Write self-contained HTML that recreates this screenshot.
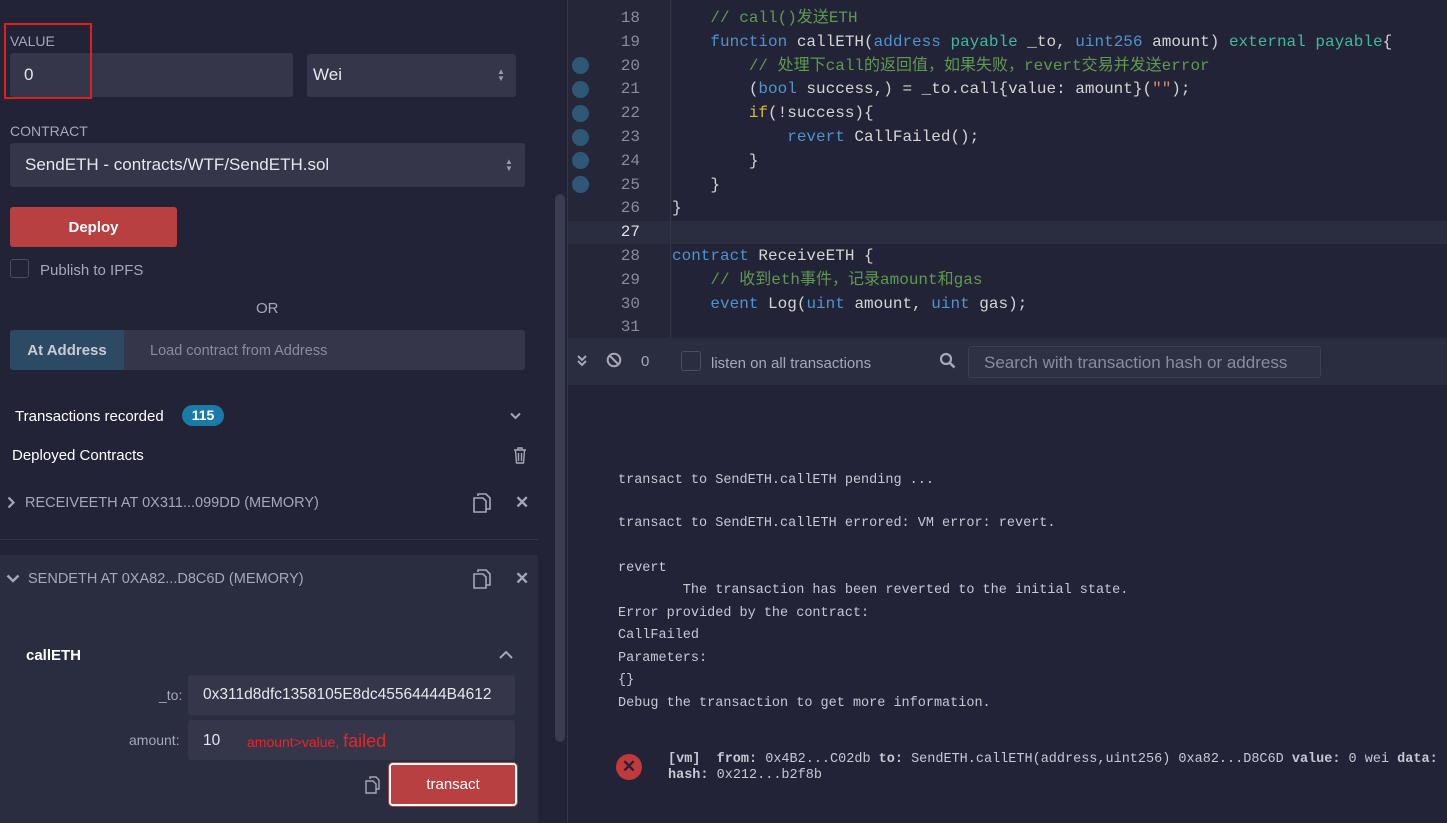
<!DOCTYPE html>
<html><head><meta charset="utf-8"><style>
*{margin:0;padding:0;box-sizing:border-box}
body{width:1447px;height:823px;overflow:hidden;background:#222336;font-family:"Liberation Sans","Noto Sans CJK SC",sans-serif;color:#c9cbd6;position:relative}
.a{position:absolute}
.in{background:#353649;border-radius:3px}
.mono{font-family:"Liberation Mono","Noto Sans CJK SC",monospace}
.code div{position:absolute;left:0;height:24px;line-height:24px;font-size:16px;white-space:pre;color:#d4d4d4}
.ln{position:absolute;left:0;width:72px;text-align:right;font-size:16px;line-height:24px;color:#8a8c9e}
.cm{color:#5f9a50}.kw{color:#4e94ce}.ty{color:#3fb9a0}.if{color:#d7ba3d}.st{color:#ce9178}
.t div{position:absolute;left:618px;font-size:13.5px;color:#c6c8d4;white-space:pre}
.dot{position:absolute;left:572px;width:17px;height:17px;border-radius:50%;background:#2f5877}
.L{margin-top:2px}
</style></head><body>
<!-- LEFT PANEL -->
<div class="a" style="left:10px;top:33px;font-size:14px;color:#a6a8b8">VALUE</div>
<div class="a in" style="left:10px;top:53px;width:283px;height:44px"></div>
<div class="a" style="left:24px;top:65px;font-size:17px;color:#e6e7ee">0</div>
<div class="a" style="left:4px;top:23px;width:88px;height:76px;border:2px solid #e02020"></div>
<div class="a in" style="left:307px;top:54px;width:209px;height:43px"></div>
<div class="a" style="left:313px;top:65px;font-size:17px;color:#e6e7ee">Wei</div>
<div class="a" style="left:497px;top:68px;font-size:8px;line-height:7px;color:#9a9cac">▲<br>▼</div>
<div class="a" style="left:10px;top:123px;font-size:14px;color:#a6a8b8">CONTRACT</div>
<div class="a in" style="left:10px;top:143px;width:515px;height:44px"></div>
<div class="a" style="left:25px;top:155px;font-size:17px;color:#e6e7ee">SendETH - contracts/WTF/SendETH.sol</div>
<div class="a" style="left:505px;top:158px;font-size:8px;line-height:7px;color:#9a9cac">▲<br>▼</div>
<div class="a" style="left:10px;top:207px;width:167px;height:40px;background:#b84040;border-radius:3px;color:#fff;font-size:15px;font-weight:bold;text-align:center;line-height:41px">Deploy</div>
<div class="a" style="left:10px;top:259px;width:19px;height:19px;border:1px solid #4a4c60;border-radius:3px"></div>
<div class="a" style="left:40px;top:262px;font-size:15px;color:#a6a8b8">Publish to IPFS</div>
<div class="a" style="left:256px;top:300px;font-size:15px;color:#a6a8b8">OR</div>
<div class="a in" style="left:10px;top:330px;width:515px;height:40px"></div>
<div class="a" style="left:10px;top:330px;width:114px;height:40px;background:#2c4a63;border-radius:3px 0 0 3px;color:#c9cbd6;font-size:15px;font-weight:bold;text-align:center;line-height:41px">At Address</div>
<div class="a" style="left:150px;top:343px;font-size:14.5px;color:#8a8c9e">Load contract from Address</div>
<div class="a" style="left:15px;top:408px;font-size:15px;color:#fff">Transactions recorded</div>
<div class="a" style="left:182px;top:405px;width:42px;height:21px;border-radius:11px;background:#1a7aa8;color:#fff;font-size:14px;font-weight:bold;text-align:center;line-height:21px">115</div>
<svg class="a" style="left:510px;top:412px" width="11" height="8" viewBox="0 0 11 8"><path d="M1 1.5l4.5 4.5 4.5-4.5" stroke="#a6a8b8" stroke-width="2" fill="none"/></svg>
<div class="a" style="left:12px;top:447px;font-size:15px;color:#fff">Deployed Contracts</div>
<svg class="a" style="left:513px;top:447px" width="14" height="17" viewBox="0 0 14 17"><path d="M1 3h12M5 3V1h4v2M2.5 3l1 13h7l1-13M5.5 6v8M8.5 6v8" stroke="#a6a8b8" stroke-width="1.4" fill="none"/></svg>
<svg class="a" style="left:7px;top:496px" width="8" height="13" viewBox="0 0 8 13"><path d="M1.5 1.5l5 5-5 5" stroke="#a6a8b8" stroke-width="2.2" fill="none"/></svg>
<div class="a" style="left:25px;top:495px;font-size:14.5px;color:#a6a8b8">RECEIVEETH AT 0X311...099DD (MEMORY)</div>
<svg class="a" style="left:472px;top:492px" width="20" height="22" viewBox="0 0 20 22"><path d="M6 4V2h8l4 4v11h-4M2 6h9l3 3v11H2z" stroke="#a6a8b8" stroke-width="1.6" fill="none"/></svg>
<div class="a" style="left:515px;top:493px;font-size:17px;color:#a6a8b8;font-weight:bold">✕</div>
<div class="a" style="left:0;top:539px;width:538px;height:1px;background:#33354a"></div>
<div class="a" style="left:0;top:555px;width:538px;height:268px;background:#2a2c3f"></div>
<svg class="a" style="left:6px;top:574px" width="14" height="9" viewBox="0 0 14 9"><path d="M1.5 1.5l5.5 5.5 5.5-5.5" stroke="#a6a8b8" stroke-width="2.4" fill="none"/></svg>
<div class="a" style="left:28px;top:571px;font-size:14.5px;color:#a6a8b8">SENDETH AT 0XA82...D8C6D (MEMORY)</div>
<svg class="a" style="left:472px;top:568px" width="20" height="22" viewBox="0 0 20 22"><path d="M6 4V2h8l4 4v11h-4M2 6h9l3 3v11H2z" stroke="#a6a8b8" stroke-width="1.6" fill="none"/></svg>
<div class="a" style="left:515px;top:569px;font-size:17px;color:#a6a8b8;font-weight:bold">✕</div>
<div class="a" style="left:26px;top:647px;font-size:15px;color:#fff;font-weight:bold">callETH</div>
<svg class="a" style="left:499px;top:650px" width="14" height="10" viewBox="0 0 14 10"><path d="M1 8l6-6 6 6" stroke="#a6a8b8" stroke-width="2" fill="none"/></svg>
<div class="a" style="left:159px;top:687px;font-size:14px;color:#a6a8b8">_to:</div>
<div class="a in" style="left:188px;top:675px;width:327px;height:40px"></div>
<div class="a" style="left:203px;top:686px;font-size:15.5px;color:#e6e7ee">0x311d8dfc1358105E8dc45564444B4612</div>
<div class="a" style="left:129px;top:732px;font-size:14px;color:#a6a8b8">amount:</div>
<div class="a in" style="left:188px;top:720px;width:327px;height:40px"></div>
<div class="a" style="left:203px;top:732px;font-size:15.5px;color:#e6e7ee">10</div>
<div class="a" style="left:247px;top:731px;font-size:14px;color:#e8262a">amount&gt;value, <span style="font-size:18px">failed</span></div>
<svg class="a" style="left:365px;top:776px" width="16" height="18" viewBox="0 0 16 18"><path d="M5 3V1h6l3 3v9h-3M1 5h7l3 3v9H1z" stroke="#a6a8b8" stroke-width="1.4" fill="none"/></svg>
<div class="a" style="left:389px;top:763px;width:128px;height:43px;border:2px solid #fff;border-radius:4px;box-shadow:0 0 0 1px #b84040"></div>
<div class="a" style="left:391px;top:765px;width:124px;height:39px;background:#b84040;border-radius:2px;color:#fff;font-size:15px;text-align:center;line-height:40px">transact</div>
<div class="a" style="left:555px;top:194px;width:10px;height:548px;background:#3a3c52;border-radius:5px"></div>
<div class="a" style="left:567px;top:0;width:1px;height:823px;background:#33354a"></div>
<!-- EDITOR -->
<div class="a" style="left:568px;top:0;width:104px;height:338px;background:#252739"></div>
<div class="a" style="left:568px;top:221px;width:879px;height:23px;background:#2a2c3f"></div>
<div class="a" style="left:670px;top:0;width:1px;height:338px;background:#33354a"></div>
<div class="dot" style="top:57px"></div><div class="dot" style="top:81px"></div><div class="dot" style="top:105px"></div><div class="dot" style="top:129px"></div><div class="dot" style="top:152px"></div><div class="dot" style="top:176px"></div>
<div class="a mono" style="left:568px;top:6px">
<div class="ln" style="top:0">18</div><div class="ln" style="top:24px">19</div><div class="ln" style="top:48px">20</div><div class="ln" style="top:71px">21</div><div class="ln" style="top:95px">22</div><div class="ln" style="top:119px">23</div><div class="ln" style="top:143px">24</div><div class="ln" style="top:167px">25</div><div class="ln" style="top:190px">26</div><div class="ln" style="top:214px;color:#e0e0e0">27</div><div class="ln" style="top:238px">28</div><div class="ln" style="top:262px">29</div><div class="ln" style="top:286px">30</div><div class="ln" style="top:309px">31</div>
</div>
<div class="a mono code" style="left:672px;top:6px">
<div style="top:0"><span class="cm">    // call()发送ETH</span></div>
<div style="top:24px">    <span class="kw">function</span> callETH(<span class="kw">address</span> <span class="ty">payable</span> _to, <span class="kw">uint256</span> amount) <span class="ty">external</span> <span class="ty">payable</span>{</div>
<div style="top:48px"><span class="cm">        // 处理下call的返回值，如果失败，revert交易并发送error</span></div>
<div style="top:71px">        (<span class="kw">bool</span> success,) = _to.call{value: amount}(<span class="st">""</span>);</div>
<div style="top:95px">        <span class="if">if</span>(!success){</div>
<div style="top:119px">            <span class="kw">revert</span> CallFailed();</div>
<div style="top:143px">        }</div>
<div style="top:167px">    }</div>
<div style="top:190px">}</div>
<div style="top:238px"><span class="kw">contract</span> ReceiveETH {</div>
<div style="top:262px"><span class="cm">    // 收到eth事件，记录amount和gas</span></div>
<div style="top:286px">    <span class="kw">event</span> Log(<span class="kw">uint</span> amount, <span class="kw">uint</span> gas);</div>
</div>
<!-- TERMINAL BAR -->
<div class="a" style="left:568px;top:338px;width:879px;height:47px;background:#2a2c3f"></div>
<svg class="a" style="left:576px;top:354px" width="12" height="13" viewBox="0 0 12 13"><path d="M2 2l4 4 4-4M2 7l4 4 4-4" stroke="#a6a8b8" stroke-width="2" fill="none"/></svg>
<svg class="a" style="left:606px;top:352px" width="16" height="16" viewBox="0 0 16 16"><circle cx="8" cy="8" r="6.3" stroke="#a6a8b8" stroke-width="2" fill="none"/><path d="M3.5 3.5l9 9" stroke="#a6a8b8" stroke-width="2"/></svg>
<div class="a" style="left:641px;top:353px;font-size:15px;color:#a6a8b8">0</div>
<div class="a" style="left:681px;top:351px;width:20px;height:20px;border:1px solid #4a4c60;border-radius:3px"></div>
<div class="a" style="left:711px;top:355px;font-size:15px;color:#a6a8b8">listen on all transactions</div>
<svg class="a" style="left:939px;top:352px" width="17" height="17" viewBox="0 0 17 17"><circle cx="7" cy="7" r="5" stroke="#a6a8b8" stroke-width="2.2" fill="none"/><path d="M10.5 10.5l5 5" stroke="#a6a8b8" stroke-width="2.6"/></svg>
<div class="a" style="left:968px;top:346px;width:353px;height:32px;background:#2e3043;border:1px solid #3c3e52;border-radius:3px"></div>
<div class="a" style="left:984px;top:353px;font-size:17px;color:#8a8c9e">Search with transaction hash or address</div>
<!-- TERMINAL -->
<div class="a mono t" style="left:0;top:0">
<div style="top:473px">transact to SendETH.callETH pending ...</div>
<div style="top:516px">transact to SendETH.callETH errored: VM error: revert.</div>
<div style="top:561px">revert</div>
<div style="top:583px">        The transaction has been reverted to the initial state.</div>
<div style="top:606px">Error provided by the contract:</div>
<div style="top:628px">CallFailed</div>
<div style="top:651px">Parameters:</div>
<div style="top:673px">{}</div>
<div style="top:696px">Debug the transaction to get more information.</div>
<div style="top:752px;left:668px"><b>[vm]</b>  <b>from:</b> 0x4B2...C02db <b>to:</b> SendETH.callETH(address,uint256) 0xa82...D8C6D <b>value:</b> 0 wei <b>data:</b></div>
<div style="top:768px;left:668px"><b>hash:</b> 0x212...b2f8b</div>
</div>
<div class="a" style="left:616px;top:754px;width:26px;height:26px;border-radius:50%;background:#c0393b;color:#222336;font-size:17px;font-weight:bold;text-align:center;line-height:26px">✕</div>
</body></html>
